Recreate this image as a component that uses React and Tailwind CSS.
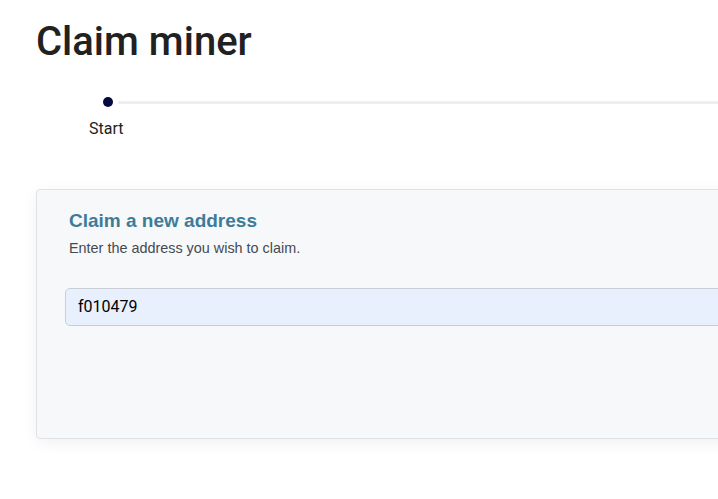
import React from 'react';

export default function App() {
  return (
    <div className="w-[718px] h-[499px] overflow-hidden bg-white" style={{ fontFamily: 'Roboto, sans-serif' }}>
      <div className="w-[1200px] pl-9 pt-[14px]">
        <h1 className="text-[40px] leading-[56px] text-[#212121] font-medium">Claim miner</h1>

        {/* stepper */}
        <div className="mt-[27px] flex flex-col">
          <div className="flex items-center h-[10px]">
            <div className="w-[67px]" />
            <div className="w-[10px] h-[10px] rounded-full bg-[#06093f]" />
            <div className="ml-[5px] flex-1 h-[3px] bg-[#eeeeee]" />
          </div>
          <div className="ml-[53px] mt-[12px] text-[16px] leading-[20px] text-[#212121]">Start</div>
        </div>

        {/* card */}
        <div className="mt-[50px] h-[250px] bg-[#f7f8fa] border border-[#e0e2e5] rounded-[4px] shadow-[0_4px_16px_rgba(0,0,0,0.06)] pt-[18px] pl-8 pr-8">
          <h2 className="text-[19px] leading-[26px] font-bold text-[#3d7c99]" style={{ fontFamily: '"Liberation Sans", Arial, sans-serif' }}>
            Claim a new address
          </h2>
          <p className="mt-[4px] text-[14.4px] leading-[20px] text-[#444a52]" style={{ fontFamily: '"Liberation Sans", Arial, sans-serif' }}>
            Enter the address you wish to claim.
          </p>
          <div className="mt-[30px] -ml-1 h-[38px] bg-[#e8f0fe] border border-[#c9ced6] rounded-[5px] flex items-center pl-3 text-[16px] text-black">
            f010479
          </div>
        </div>
      </div>
    </div>
  );
}
